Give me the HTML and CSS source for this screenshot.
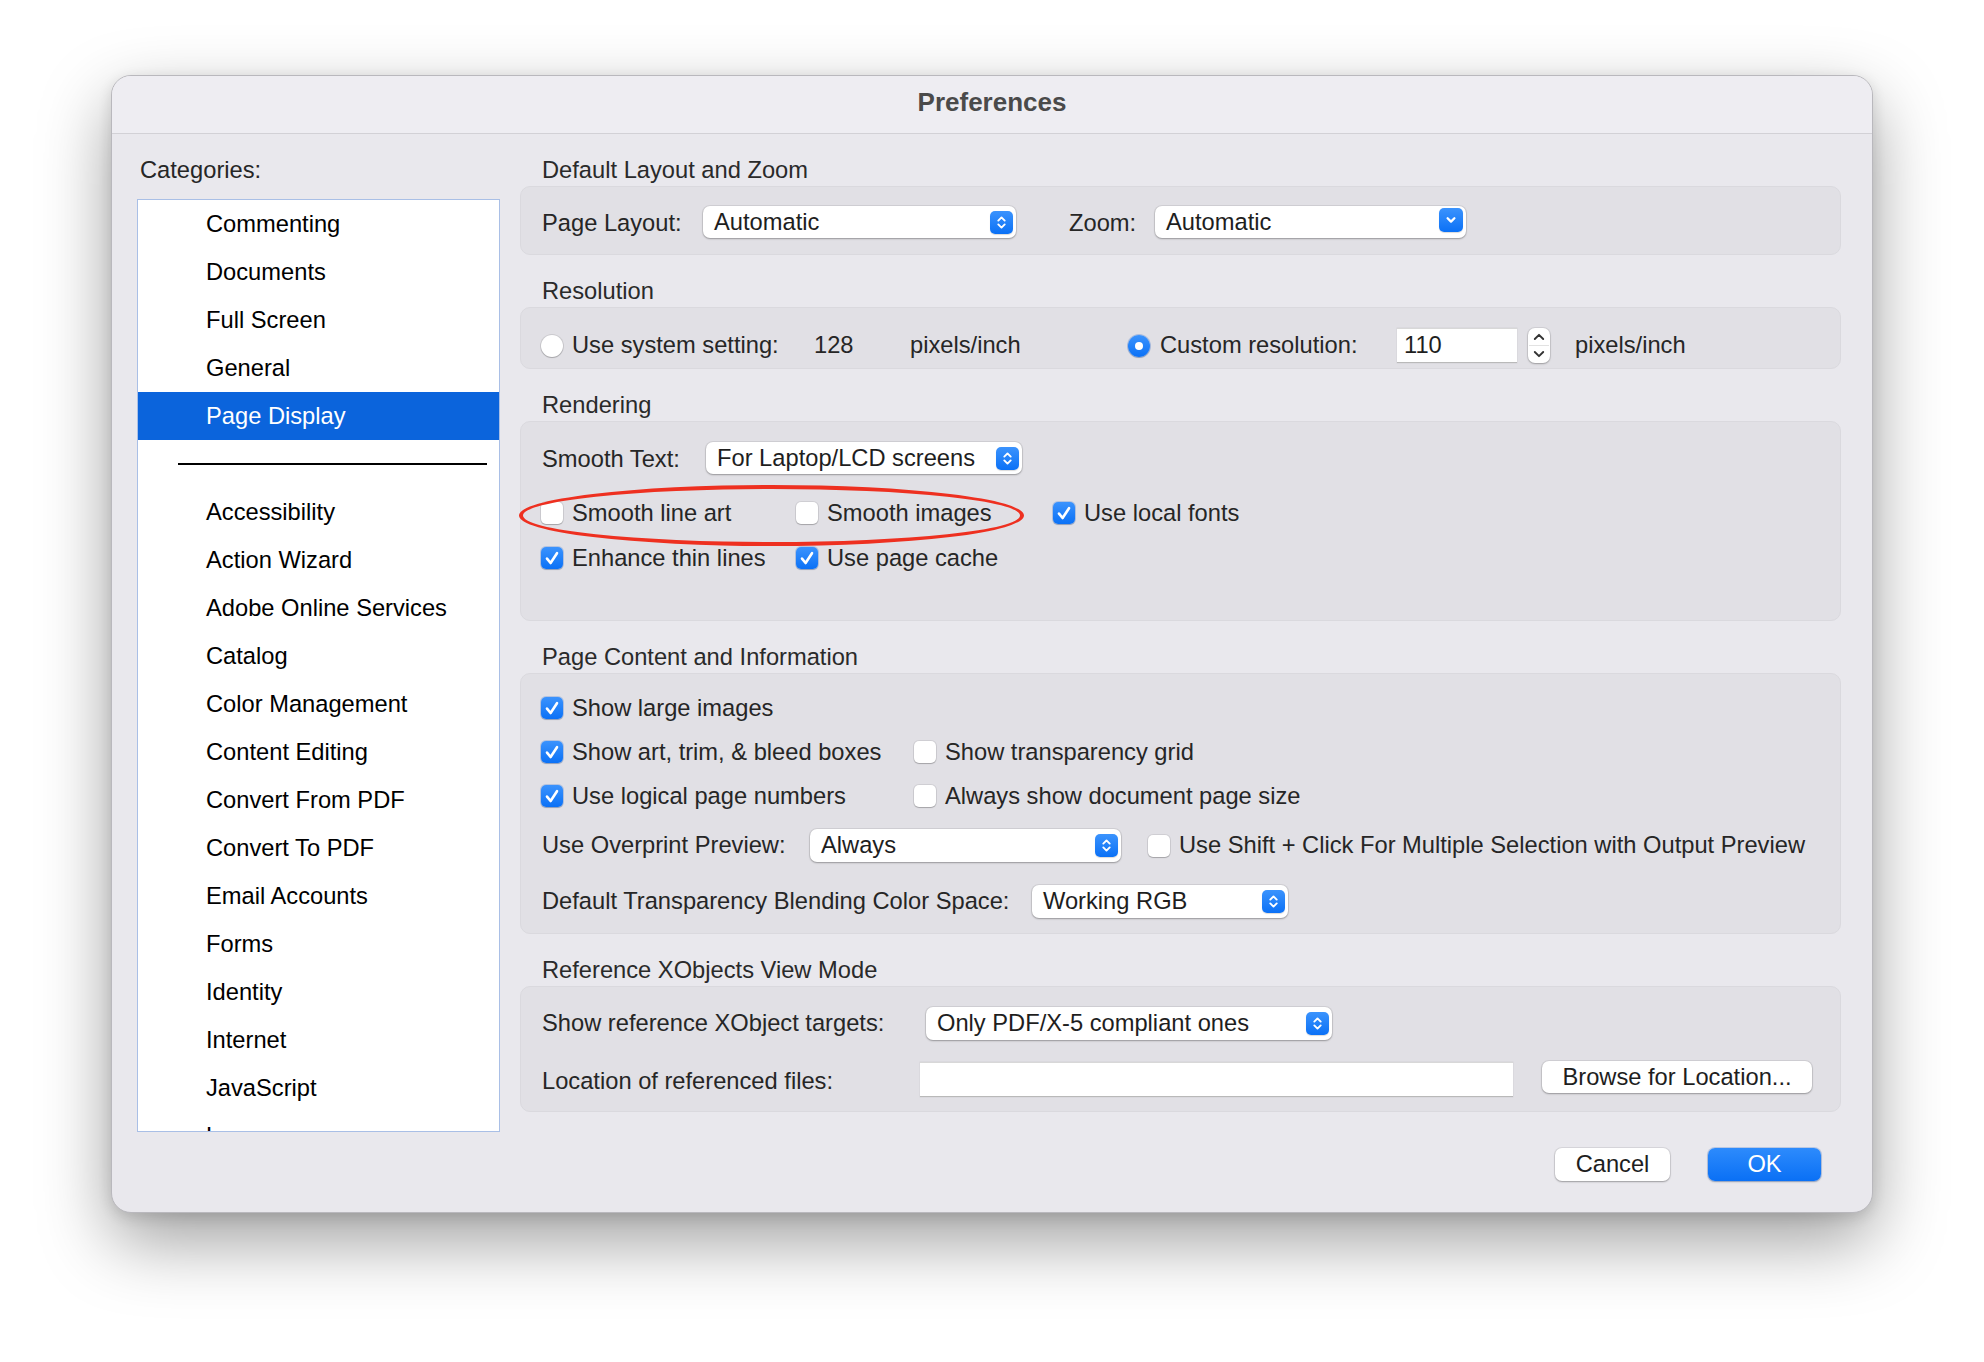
FILE: index.html
```html
<!DOCTYPE html>
<html lang="en">
<head>
<meta charset="utf-8">
<title>Preferences</title>
<link rel="stylesheet" href="styles.css">
</head>
<body>
<div class="page">
  <div class="window">
    <div class="titlebar">Preferences</div>
    <div class="content">
      <aside class="sidebar">
        <div class="cat-label">Categories:</div>
        <ul class="cat-list">
          <li>Commenting</li>
          <li>Documents</li>
          <li>Full Screen</li>
          <li>General</li>
          <li class="selected">Page Display</li>
          <li class="sep"><span class="sep-line"></span></li>
          <li>Accessibility</li>
          <li>Action Wizard</li>
          <li>Adobe Online Services</li>
          <li>Catalog</li>
          <li>Color Management</li>
          <li>Content Editing</li>
          <li>Convert From PDF</li>
          <li>Convert To PDF</li>
          <li>Email Accounts</li>
          <li>Forms</li>
          <li>Identity</li>
          <li>Internet</li>
          <li>JavaScript</li>
          <li>Language</li>
        </ul>
      </aside>

      <main class="main">
        <div class="sec-title first">Default Layout and Zoom</div>
        <div class="group g1">
          <div class="row">
            <span class="lbl w-pagelayout">Page Layout:</span>
            <div class="popup w313">
              <span>Automatic</span>
              <span class="pbtn"><svg viewBox="0 0 23 23" width="23" height="23"><path d="M8.3 9.6 L11.5 6.4 L14.7 9.6 M8.3 13.4 L11.5 16.6 L14.7 13.4" fill="none" stroke="#fff" stroke-width="1.9" stroke-linecap="round" stroke-linejoin="round"/></svg></span>
            </div>
            <span class="lbl w-zoom">Zoom:</span>
            <div class="popup w311">
              <span>Automatic</span>
              <span class="pbtn single"><svg viewBox="0 0 24 24" width="24" height="24"><path d="M8.6 10.2 L12 13.6 L15.4 10.2" fill="none" stroke="#fff" stroke-width="2.3" stroke-linecap="round" stroke-linejoin="round"/></svg></span>
            </div>
          </div>
        </div>

        <div class="sec-title">Resolution</div>
        <div class="group g2">
          <div class="row">
            <span class="radio"></span>
            <span class="lbl w-sys">Use system setting:</span>
            <span class="lbl w-128">128</span>
            <span class="lbl w-ppi">pixels/inch</span>
            <span class="radio on"></span>
            <span class="lbl w-custom">Custom resolution:</span>
            <div class="field w120"><span>110</span></div>
            <div class="stepper">
              <svg viewBox="0 0 22 35" width="22" height="35"><path d="M6.8 11 L11 6.8 L15.2 11" fill="none" stroke="#333" stroke-width="1.9" stroke-linecap="round" stroke-linejoin="round"/><path d="M6.8 24 L11 28.2 L15.2 24" fill="none" stroke="#333" stroke-width="1.9" stroke-linecap="round" stroke-linejoin="round"/><line x1="1" y1="17.5" x2="21" y2="17.5" stroke="#e2e2e2" stroke-width="1"/></svg>
            </div>
            <span class="lbl ppi2">pixels/inch</span>
          </div>
        </div>

        <div class="sec-title">Rendering</div>
        <div class="group g3">
          <div class="row h32">
            <span class="lbl w-smooth">Smooth Text:</span>
            <div class="popup w316">
              <span>For Laptop/LCD screens</span>
              <span class="pbtn"><svg viewBox="0 0 23 23" width="23" height="23"><path d="M8.3 9.6 L11.5 6.4 L14.7 9.6 M8.3 13.4 L11.5 16.6 L14.7 13.4" fill="none" stroke="#fff" stroke-width="1.9" stroke-linecap="round" stroke-linejoin="round"/></svg></span>
            </div>
          </div>
          <div class="checkgrid render-a">
            <label class="chk"><span class="box"></span>Smooth line art</label>
            <label class="chk"><span class="box"></span>Smooth images</label>
            <label class="chk"><span class="box on"><svg viewBox="0 0 22 22" width="22" height="22"><path d="M6 11.6 L9.6 16 L16 6.2" fill="none" stroke="#fff" stroke-width="2.6" stroke-linecap="round" stroke-linejoin="round"/></svg></span>Use local fonts</label>
          </div>
          <div class="checkgrid render-b">
            <label class="chk"><span class="box on"><svg viewBox="0 0 22 22" width="22" height="22"><path d="M6 11.6 L9.6 16 L16 6.2" fill="none" stroke="#fff" stroke-width="2.6" stroke-linecap="round" stroke-linejoin="round"/></svg></span>Enhance thin lines</label>
            <label class="chk"><span class="box on"><svg viewBox="0 0 22 22" width="22" height="22"><path d="M6 11.6 L9.6 16 L16 6.2" fill="none" stroke="#fff" stroke-width="2.6" stroke-linecap="round" stroke-linejoin="round"/></svg></span>Use page cache</label>
          </div>
          <div class="highlight"></div>
        </div>

        <div class="sec-title">Page Content and Information</div>
        <div class="group g4">
          <div class="checkgrid content-grid">
            <label class="chk"><span class="box on"><svg viewBox="0 0 22 22" width="22" height="22"><path d="M6 11.6 L9.6 16 L16 6.2" fill="none" stroke="#fff" stroke-width="2.6" stroke-linecap="round" stroke-linejoin="round"/></svg></span>Show large images</label>
            <span></span>
            <label class="chk"><span class="box on"><svg viewBox="0 0 22 22" width="22" height="22"><path d="M6 11.6 L9.6 16 L16 6.2" fill="none" stroke="#fff" stroke-width="2.6" stroke-linecap="round" stroke-linejoin="round"/></svg></span>Show art, trim, &amp; bleed boxes</label>
            <label class="chk"><span class="box"></span>Show transparency grid</label>
            <label class="chk"><span class="box on"><svg viewBox="0 0 22 22" width="22" height="22"><path d="M6 11.6 L9.6 16 L16 6.2" fill="none" stroke="#fff" stroke-width="2.6" stroke-linecap="round" stroke-linejoin="round"/></svg></span>Use logical page numbers</label>
            <label class="chk"><span class="box"></span>Always show document page size</label>
          </div>
          <div class="row h33 overprint">
            <span class="lbl w-overprint">Use Overprint Preview:</span>
            <div class="popup w311">
              <span>Always</span>
              <span class="pbtn"><svg viewBox="0 0 23 23" width="23" height="23"><path d="M8.3 9.6 L11.5 6.4 L14.7 9.6 M8.3 13.4 L11.5 16.6 L14.7 13.4" fill="none" stroke="#fff" stroke-width="1.9" stroke-linecap="round" stroke-linejoin="round"/></svg></span>
            </div>
            <label class="chk shift"><span class="box"></span>Use Shift + Click For Multiple Selection with Output Preview</label>
          </div>
          <div class="row h33 blending">
            <span class="lbl w-blend">Default Transparency Blending Color Space:</span>
            <div class="popup w256">
              <span>Working RGB</span>
              <span class="pbtn"><svg viewBox="0 0 23 23" width="23" height="23"><path d="M8.3 9.6 L11.5 6.4 L14.7 9.6 M8.3 13.4 L11.5 16.6 L14.7 13.4" fill="none" stroke="#fff" stroke-width="1.9" stroke-linecap="round" stroke-linejoin="round"/></svg></span>
            </div>
          </div>
        </div>

        <div class="sec-title">Reference XObjects View Mode</div>
        <div class="group g5">
          <div class="row h33">
            <span class="lbl w-xobj">Show reference XObject targets:</span>
            <div class="popup w406">
              <span>Only PDF/X-5 compliant ones</span>
              <span class="pbtn"><svg viewBox="0 0 23 23" width="23" height="23"><path d="M8.3 9.6 L11.5 6.4 L14.7 9.6 M8.3 13.4 L11.5 16.6 L14.7 13.4" fill="none" stroke="#fff" stroke-width="1.9" stroke-linecap="round" stroke-linejoin="round"/></svg></span>
            </div>
          </div>
          <div class="row loc">
            <span class="lbl w-loc">Location of referenced files:</span>
            <div class="field w593 loc-field"></div>
            <button class="btn browse">Browse for Location...</button>
          </div>
        </div>

        <div class="footer">
          <button class="btn cancel">Cancel</button>
          <button class="btn ok">OK</button>
        </div>
      </main>
    </div>
  </div>
</div>
</body>
</html>
```

FILE: styles.css
```css
* { box-sizing: border-box; }

html, body {
  margin: 0;
  padding: 0;
  background: #ffffff;
  width: 1984px;
  height: 1362px;
  overflow: hidden;
}

body {
  font-family: "Liberation Sans", Arial, Helvetica, sans-serif;
  font-size: 23.7px;
  color: #262626;
}

.page {
  padding: 75px 0 0 111px;
}

.window {
  width: 1762px;
  height: 1138px;
  background: #e9e8ed;
  border-radius: 20px;
  border: 1px solid #b9b8bd;
  box-shadow: 0 28px 70px rgba(0, 0, 0, 0.38), 0 4px 14px rgba(0, 0, 0, 0.12);
  overflow: hidden;
}

.titlebar {
  height: 58px;
  border-bottom: 1px solid #d2d1d6;
  background: #eeedf2;
  display: flex;
  align-items: center;
  justify-content: center;
  font-weight: bold;
  font-size: 26px;
  color: #4a4a4a;
  padding-bottom: 4px;
}

.content {
  display: flex;
  gap: 20px;
  padding: 21px 31px 0 25px;
}

/* Sidebar */
.sidebar {
  width: 363px;
  flex: none;
}

.cat-label {
  height: 31px;
  line-height: 31px;
  padding-left: 3px;
  margin-bottom: 13px;
  color: #262626;
}

.cat-list {
  list-style: none;
  margin: 0;
  padding: 0;
  height: 933px;
  background: #ffffff;
  border: 1px solid #a9bfe6;
  overflow: hidden;
}

.cat-list li {
  height: 48px;
  line-height: 48px;
  padding-left: 68px;
  color: #000;
  white-space: nowrap;
}

.cat-list li.selected {
  background: #0b64dc;
  color: #ffffff;
}

.cat-list li.sep {
  display: flex;
  align-items: center;
  padding-left: 40px;
  padding-right: 12px;
}

.sep-line {
  display: block;
  flex: 1;
  height: 2px;
  background: #000;
}

/* Main */
.main {
  flex: 1;
  min-width: 0;
}

.sec-title {
  height: 31px;
  line-height: 31px;
  padding-left: 22px;
  margin-top: 21px;
  color: #2a2a2a;
}

.sec-title.first { margin-top: 0; }

.group {
  position: relative;
  background: #e1e0e5;
  border: 1px solid #dad9de;
  border-radius: 10px;
  padding: 0 20px 0 21px;
}

.row {
  display: flex;
  align-items: center;
  white-space: nowrap;
}

.lbl { flex: none; }

.g1 { height: 69px; padding-top: 19px; }
.g1 .row { height: 32px; }
.g1 .lbl { padding-top: 3px; }
.w-pagelayout { width: 161px; }
.w-zoom { width: 86px; margin-left: 53px; }

.g2 { height: 62px; padding-top: 20px; }
.g2 .row { height: 35px; }
.w-sys { width: 242px; margin-left: 9px; }
.w-128 { width: 96px; }
.w-ppi { width: 218px; }
.w-custom { width: 237px; margin-left: 10px; }
.ppi2 { margin-left: 25px; }

.g3 { height: 200px; padding-top: 20px; }
.h32 { height: 32px; }
.h33 { height: 33px; }
.w-smooth { width: 164px; }
.g3 .h32 .lbl { padding-top: 2px; }

.checkgrid {
  display: grid;
  align-items: center;
}

.render-a, .render-b {
  grid-template-columns: 255px 257px auto;
  height: 30px;
}
.render-a { margin-top: 24px; }
.render-b { margin-top: 15px; }

.g4 { height: 261px; padding-top: 19px; }
.content-grid {
  grid-template-columns: 373px auto;
  grid-auto-rows: 30px;
  row-gap: 14px;
}
.overprint { margin-top: 18px; }
.blending { margin-top: 23px; }
.w-overprint { width: 268px; }
.w-blend { width: 490px; }
.shift { margin-left: 28px; }

.g5 { height: 126px; padding-top: 20px; }
.w-xobj { width: 384px; }
.w-loc { width: 378px; }
.loc {
  margin-top: 21px;
  height: 36px;
}
.loc .lbl { align-self: center; padding-top: 4px; }
.loc-field { align-self: flex-end; height: 33px; }
.browse {
  align-self: flex-start;
  margin-left: 29px;
  width: 270px;
  height: 32px;
}

/* Popup button */
.popup {
  flex: none;
  height: 32px;
  background: #ffffff;
  border-radius: 7px;
  box-shadow: 0 0 0 1px rgba(0, 0, 0, 0.07), 0 1px 2px rgba(0, 0, 0, 0.28);
  display: flex;
  align-items: center;
  justify-content: space-between;
  padding: 0 3px 0 11px;
  color: #1e1e1e;
}
.h33 .popup { height: 33px; }

.w313 { width: 313px; }
.w311 { width: 311px; }
.w316 { width: 316px; }
.w256 { width: 256px; }
.w406 { width: 406px; }
.w120 { width: 120px; }
.w593 { width: 593px; }

.pbtn {
  width: 23px;
  height: 23px;
  border-radius: 5px;
  background: linear-gradient(#3b93fd, #0b71f6);
  box-shadow: 0 1px 1px rgba(0, 0, 0, 0.15);
  display: flex;
}
.pbtn.single {
  width: 24px;
  height: 24px;
  align-self: flex-start;
  margin-top: 2px;
}
.pbtn svg { display: block; }

/* Radio */
.radio {
  flex: none;
  width: 22px;
  height: 22px;
  border-radius: 50%;
  background: #ffffff;
  box-shadow: 0 0 0 1px rgba(0, 0, 0, 0.1), 0 1px 1px rgba(0, 0, 0, 0.18);
  margin-left: -1px;
  position: relative;
}
.radio.on {
  background: linear-gradient(#3b93fd, #0b71f6);
  box-shadow: 0 0 0 1px rgba(0, 80, 200, 0.25), 0 1px 1px rgba(0, 0, 0, 0.18);
  margin-left: 0;
}
.radio.on::after {
  content: "";
  position: absolute;
  left: 7px;
  top: 7px;
  width: 8px;
  height: 8px;
  border-radius: 50%;
  background: #ffffff;
}

/* Text fields */
.field {
  flex: none;
  height: 35px;
  background: #ffffff;
  border-top: 1px solid #d8d8d8;
  border-bottom: 1px solid #b9b9b9;
  box-shadow: 0 0 0 0.5px rgba(0, 0, 0, 0.06);
  display: flex;
  align-items: center;
  padding-left: 7px;
  color: #1e1e1e;
}

.stepper {
  flex: none;
  margin-left: 11px;
  width: 22px;
  height: 35px;
  background: #ffffff;
  border-radius: 7px;
  box-shadow: 0 0 0 1px rgba(0, 0, 0, 0.07), 0 1px 2px rgba(0, 0, 0, 0.25);
}
.stepper svg { display: block; }

/* Checkboxes */
.chk {
  display: flex;
  align-items: center;
  gap: 9px;
  white-space: nowrap;
  color: #262626;
}

.box {
  flex: none;
  width: 22px;
  height: 22px;
  border-radius: 5px;
  background: #ffffff;
  box-shadow: 0 0 0 1px rgba(0, 0, 0, 0.08), 0 1px 1px rgba(0, 0, 0, 0.2);
  margin-left: -1px;
}
.box.on {
  background: linear-gradient(#3b93fd, #0b71f6);
  box-shadow: 0 0 0 1px rgba(0, 80, 200, 0.2), 0 1px 1px rgba(0, 0, 0, 0.2);
}
.box svg { display: block; }

/* Red annotation ellipse */
.highlight {
  position: absolute;
  left: -2px;
  top: 63px;
  width: 505px;
  height: 61px;
  border: 4px solid #ee3020;
  border-radius: 50%;
  pointer-events: none;
}

/* Buttons */
.btn {
  font-family: inherit;
  font-size: 23.7px;
  color: #1e1e1e;
  background: #ffffff;
  border: none;
  border-radius: 7px;
  box-shadow: 0 0 0 1px rgba(0, 0, 0, 0.07), 0 1px 2px rgba(0, 0, 0, 0.28);
  padding: 0;
  flex: none;
}

.footer {
  display: flex;
  justify-content: flex-end;
  gap: 38px;
  padding-right: 20px;
  margin-top: 36px;
}

.cancel {
  width: 115px;
  height: 33px;
}

.ok {
  width: 113px;
  height: 33px;
  color: #ffffff;
  background: linear-gradient(#2d8bfc, #0a70f5);
  box-shadow: 0 0 0 1px rgba(0, 80, 200, 0.2), 0 1px 2px rgba(0, 0, 0, 0.25);
}
```
